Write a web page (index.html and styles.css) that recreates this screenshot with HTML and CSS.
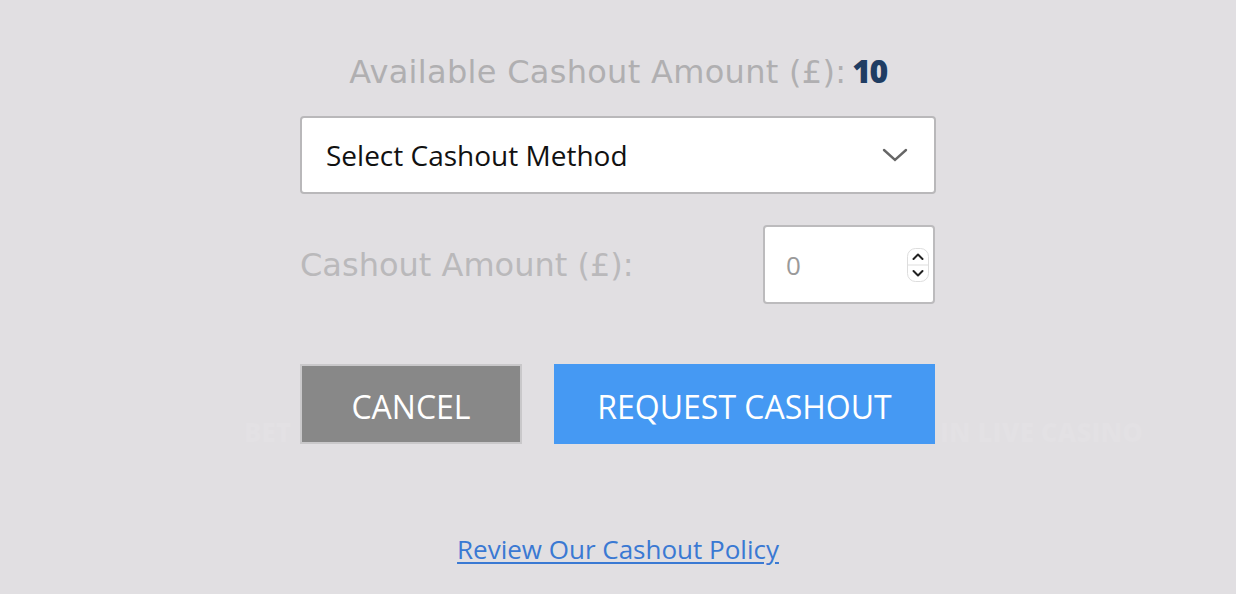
FILE: index.html
```html
<!DOCTYPE html>
<html>
<head>
<meta charset="utf-8">
<link rel="stylesheet" href="styles.css">
</head>
<body>
<div class="page">
  <div class="watermark wm-left">BET</div>
  <div class="watermark wm-right">IN LIVE CASINO</div>
  <div class="form">
    <h2 class="available">Available Cashout Amount (£):<span class="amount">10</span></h2>
    <div class="select">
      <span>Select Cashout Method</span>
      <svg class="chev" width="26" height="16" viewBox="0 0 26 16"><path d="M2 3 L13 13 L24 3" fill="none" stroke="#666" stroke-width="2.4" stroke-linecap="round"/></svg>
    </div>
    <div class="amount-row">
      <label class="amount-label">Cashout Amount (£):</label>
      <div class="number">
        <span class="num-val">0</span>
        <div class="spinner">
          <svg width="22" height="34" viewBox="0 0 22 34">
            <rect x="0.5" y="0.5" width="21" height="33" rx="8" fill="#fff" stroke="#ddd"/>
            <line x1="1" y1="17" x2="21" y2="17" stroke="#ddd"/>
            <path d="M6.5 11 L11 6.5 L15.5 11" fill="none" stroke="#222" stroke-width="2" stroke-linecap="round" stroke-linejoin="round"/>
            <path d="M6.5 23 L11 27.5 L15.5 23" fill="none" stroke="#222" stroke-width="2" stroke-linecap="round" stroke-linejoin="round"/>
          </svg>
        </div>
      </div>
    </div>
    <div class="buttons">
      <button class="btn cancel">CANCEL</button>
      <button class="btn request">REQUEST CASHOUT</button>
    </div>
    <a class="policy" href="#">Review Our Cashout Policy</a>
  </div>
</div>
</body>
</html>
```

FILE: styles.css
```css
html, body {
  margin: 0;
  padding: 0;
}
body {
  background: #e1dfe2;
  width: 1236px;
  height: 594px;
  overflow: hidden;
}
.page {
  position: relative;
  width: 1236px;
  height: 594px;
}
.watermark {
  position: absolute;
  font-family: "Open Sans", sans-serif;
  font-weight: 800;
  font-size: 26px;
  color: #e3e1e4;
  top: 414px;
}
.wm-left { left: 244px; }
.wm-right { left: 940px; }
.form {
  position: relative;
  width: 636px;
  margin: 0 auto;
  padding-top: 50px;
  display: flex;
  flex-direction: column;
}
.available {
  margin: 0;
  height: 44px;
  text-align: center;
  font-family: "DejaVu Sans", sans-serif;
  font-weight: 400;
  font-size: 32px;
  line-height: 44px;
  letter-spacing: 0.3px;
  color: #b0afb1;
}
.amount {
  margin-left: 6px;
  font-family: "Open Sans", sans-serif;
  font-size: 32px;
  line-height: 1;
  color: #1f3d63;
  font-weight: 800;
  letter-spacing: -1.5px;
}
.select {
  margin-top: 22px;
  height: 78px;
  box-sizing: border-box;
  background: #fff;
  border: 2px solid #b9b8ba;
  border-radius: 4px;
  display: flex;
  align-items: center;
  justify-content: space-between;
  padding: 0 26px 0 24px;
  font-family: "Open Sans", sans-serif;
  font-size: 28px;
  color: #111;
}
.amount-row {
  margin-top: 31px;
  display: flex;
  align-items: center;
  justify-content: space-between;
}
.amount-label {
  font-family: "DejaVu Sans", sans-serif;
  font-size: 32px;
  color: #bab9bb;
}
.number {
  width: 172px;
  height: 79px;
  margin-right: 1px;
  box-sizing: border-box;
  background: #fff;
  border: 2px solid #bcbbbd;
  border-radius: 4px;
  display: flex;
  align-items: center;
  justify-content: space-between;
  padding: 0 4px 0 21px;
}
.num-val {
  font-family: "Open Sans", sans-serif;
  font-size: 26px;
  color: #9a9a9a;
}
.spinner {
  display: flex;
}
.buttons {
  margin-top: 60px;
  display: flex;
  gap: 32px;
}
.btn {
  height: 80px;
  font-family: "Open Sans", sans-serif;
  font-size: 32px;
  color: #fff;
  border: none;
  padding: 4px 0 0;
  cursor: pointer;
}
.cancel {
  width: 222px;
  background: #888888;
  border: 2px solid #c9c8ca;
}
.request {
  width: 381px;
  background: #4599f3;
}
.policy {
  margin-top: 87px;
  align-self: center;
  font-family: "Open Sans", sans-serif;
  font-size: 26px;
  color: #3a79d3;
  text-decoration: underline;
  text-underline-offset: 3px;
}
```
